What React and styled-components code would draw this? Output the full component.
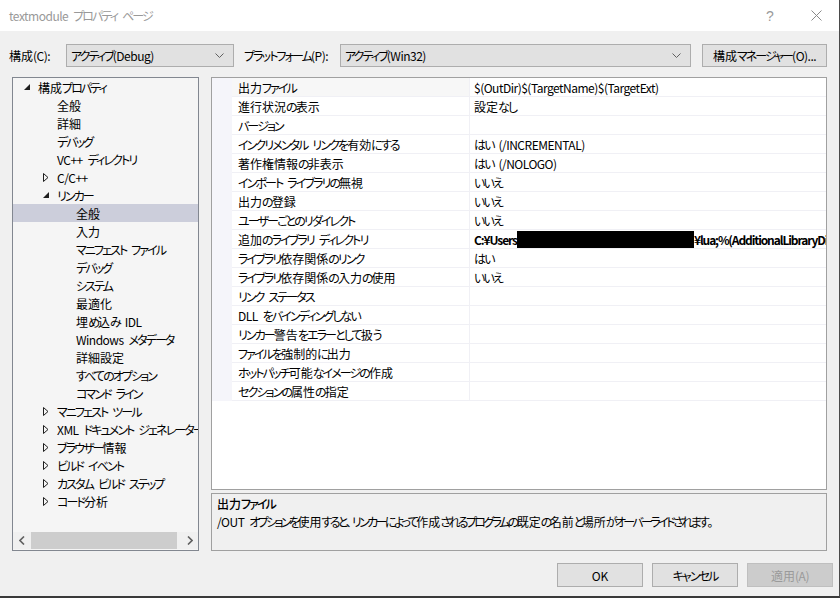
import React from 'react';
import styled, { createGlobalStyle } from 'styled-components';

const GlobalStyle = createGlobalStyle`
  html, body {
    margin: 0;
    padding: 0;
  }
  body {
    font-family: "Noto Sans CJK JP", "Noto Sans", sans-serif;
    font-size: 12px;
    color: #000;
    overflow: hidden;
  }
  * {
    box-sizing: border-box;
  }
`;

const Window = styled.div`
  width: 840px;
  height: 598px;
  display: flex;
  flex-direction: column;
  background: #f0f0f0;
  border-right: 1px solid #4a4a4a;
  border-bottom: 2px solid #3a3a3a;
  font-feature-settings: 'palt';
  overflow: hidden;
`;

const TitleBar = styled.div`
  height: 31px;
  flex: none;
  display: flex;
  align-items: center;
  padding-left: 9px;
  background: #fff;
  color: #999;
  line-height: 1;
`;

const TitleText = styled.div`
  flex: 1;
  padding-top: 1px;
`;

const TitleButton = styled.div`
  width: 46px;
  height: 31px;
  display: flex;
  align-items: center;
  justify-content: center;
  color: #9a9a9a;
  font-family: 'Liberation Sans', sans-serif;
  font-size: 14px;
`;

const Toolbar = styled.div`
  margin-top: 13px;
  height: 23px;
  flex: none;
  display: flex;
  align-items: center;
  padding-left: 9px;
`;

const Label = styled.span`
  width: ${({ w }) => w}px;
  flex: none;
  white-space: nowrap;
`;

const Combo = styled.div`
  width: ${({ w }) => w}px;
  height: 23px;
  flex: none;
  margin-right: ${({ mr }) => mr || 0}px;
  display: flex;
  align-items: center;
  justify-content: space-between;
  padding: 0 9px 0 4px;
  background: #e1e1e1;
  border: 1px solid #adadad;
`;

const Button = styled.div`
  width: ${({ w }) => w || 86}px;
  height: ${({ h }) => h || 24}px;
  display: flex;
  align-items: center;
  justify-content: center;
  background: ${({ disabled }) => (disabled ? '#cccccc' : '#e1e1e1')};
  border: 1px solid ${({ disabled }) => (disabled ? '#bfbfbf' : '#adadad')};
  color: ${({ disabled }) => (disabled ? '#9a9a9a' : '#000')};
  white-space: nowrap;
`;

const Main = styled.div`
  margin-top: 10px;
  height: 474px;
  flex: none;
  display: flex;
  gap: 12px;
  padding: 0 12px;
`;

const Tree = styled.div`
  width: 187px;
  flex: none;
  display: flex;
  flex-direction: column;
  background: #f5f5f5;
  border: 1px solid #828790;
`;

const TreeList = styled.div`
  flex: 1;
  overflow: hidden;
`;

const TreeRow = styled.div`
  height: 18px;
  display: flex;
  align-items: center;
  padding-left: ${({ level }) => 6 + level * 19}px;
  background: ${({ selected }) => (selected ? '#cccedb' : 'transparent')};
  white-space: pre;
  overflow: hidden;
`;

const Expander = styled.span`
  width: 19px;
  flex: none;
  display: flex;
  justify-content: flex-end;
  align-items: center;
  padding-right: 8px;
`;

const HScroll = styled.div`
  height: 17px;
  margin-bottom: 1px;
  flex: none;
  display: flex;
  align-items: center;
  background: #f0f0f0;
`;

const ScrollArrow = styled.div`
  width: 17px;
  height: 17px;
  display: flex;
  align-items: center;
  justify-content: center;
`;

const ScrollThumb = styled.div`
  width: 146px;
  height: 17px;
  margin-left: 1px;
  background: #cdcdcd;
`;

const ScrollTrack = styled.div`
  flex: 1;
`;

const RightPane = styled.div`
  flex: 1;
  display: flex;
  flex-direction: column;
  gap: 3px;
`;

const Grid = styled.div`
  height: 413px;
  flex: none;
  background: #fff;
  border: 1px solid #a0a0a0;
  overflow: hidden;
`;

const PropRow = styled.div`
  height: 19px;
  display: grid;
  grid-template-columns: 20px 238px 1fr;
`;

const Gutter = styled.div`
  background: #f5f5fa;
`;

const Cell = styled.div`
  display: flex;
  align-items: center;
  padding-left: ${({ pad }) => pad}px;
  border-bottom: 1px solid #f0f0f5;
  border-right: ${({ divider }) => (divider ? '1px solid #f0f0f5' : 'none')};
  background: ${({ active }) => (active ? '#f7f7f7' : '#fff')};
  font-weight: ${({ bold }) => (bold ? 700 : 400)};
  white-space: pre;
  overflow: hidden;
`;

const Redacted = styled.span`
  display: inline-block;
  width: 177px;
  height: 17px;
  flex: none;
  background: #000;
`;

const Description = styled.div`
  flex: 1;
  padding: 1px 5px;
  border: 1px solid #a0a0a0;
  line-height: 18px;
  white-space: pre;
`;

const DescTitle = styled.div`
  font-weight: 500;
`;

const Footer = styled.div`
  margin-top: 12px;
  display: flex;
  justify-content: flex-end;
  gap: 9px;
  padding-right: 6px;
`;

// Yu Gothic UI has much narrower kana than Noto, so kana runs are tightened
const spacing = {
  kana: -1.9,
  latin: -0.5,
  bold: -1.1,
  space: 2.2,
  other: 0,
};

const Run = styled.span`
  letter-spacing: ${({ ls }) => ls}px;
`;

const classify = (ch) => {
  if (ch === ' ') return 'space';
  if (/[\u3041-\u3096\u30A1-\u30FA\u30FC]/.test(ch)) return 'kana';
  if (/[\x21-\x7e¥]/.test(ch)) return 'latin';
  return 'other';
};

const Jp = ({ children, bold, kana }) => {
  const runs = [];
  for (const ch of String(children)) {
    let kind = classify(ch);
    if (bold && kind === 'latin') kind = 'bold';
    const last = runs[runs.length - 1];
    if (last && last.kind === kind) last.text += ch;
    else runs.push({ kind, text: ch });
  }
  return runs.map((r, i) => (
    <Run key={i} ls={r.kind === 'kana' && kana !== undefined ? kana : spacing[r.kind]}>
      {r.text}
    </Run>
  ));
};

const ChevronDown = () => (
  <svg width="9" height="5" viewBox="0 0 9 5">
    <polyline points="0.5,0.5 4.5,4.5 8.5,0.5" fill="none" stroke="#606060" strokeWidth="1" />
  </svg>
);

const Expanded = () => (
  <svg width="6" height="6" viewBox="0 0 6 6">
    <polygon points="6,0 6,6 0,6" fill="#1e1e1e" />
  </svg>
);

const Collapsed = () => (
  <svg width="6" height="9" viewBox="0 0 6 9">
    <polygon points="0.5,0.5 5,4.5 0.5,8.5" fill="none" stroke="#1e1e1e" strokeWidth="1" />
  </svg>
);

const ArrowSide = ({ right }) => (
  <svg width="6" height="9" viewBox="0 0 6 9">
    <polyline
      points={right ? '1,0.5 5,4.5 1,8.5' : '5,0.5 1,4.5 5,8.5'}
      fill="none"
      stroke="#606060"
      strokeWidth="1.6"
    />
  </svg>
);

const CloseIcon = () => (
  <svg width="11" height="11" viewBox="0 0 11 11">
    <path d="M0.5 0.5 L10.5 10.5 M10.5 0.5 L0.5 10.5" stroke="#8a8a8a" strokeWidth="1" />
  </svg>
);

const treeItems = [
  { level: 0, label: '構成プロパティ', open: true },
  { level: 1, label: '全般' },
  { level: 1, label: '詳細' },
  { level: 1, label: 'デバッグ' },
  { level: 1, label: 'VC++ ディレクトリ' },
  { level: 1, label: 'C/C++', open: false },
  { level: 1, label: 'リンカー', open: true },
  { level: 2, label: '全般', selected: true },
  { level: 2, label: '入力' },
  { level: 2, label: 'マニフェスト ファイル' },
  { level: 2, label: 'デバッグ' },
  { level: 2, label: 'システム' },
  { level: 2, label: '最適化' },
  { level: 2, label: '埋め込み IDL' },
  { level: 2, label: 'Windows メタデータ' },
  { level: 2, label: '詳細設定' },
  { level: 2, label: 'すべてのオプション' },
  { level: 2, label: 'コマンド ライン' },
  { level: 1, label: 'マニフェスト ツール', open: false },
  { level: 1, label: 'XML ドキュメント ジェネレーター', open: false },
  { level: 1, label: 'ブラウザー情報', open: false },
  { level: 1, label: 'ビルド イベント', open: false },
  { level: 1, label: 'カスタム ビルド ステップ', open: false },
  { level: 1, label: 'コード分析', open: false },
];

const properties = [
  { name: '出力ファイル', value: '$(OutDir)$(TargetName)$(TargetExt)' },
  { name: '進行状況の表示', value: '設定なし' },
  { name: 'バージョン', value: '' },
  { name: 'インクリメンタル リンクを有効にする', value: 'はい (/INCREMENTAL)' },
  { name: '著作権情報の非表示', value: 'はい (/NOLOGO)' },
  { name: 'インポート ライブラリの無視', value: 'いいえ' },
  { name: '出力の登録', value: 'いいえ' },
  { name: 'ユーザーごとのリダイレクト', value: 'いいえ' },
  { name: '追加のライブラリ ディレクトリ', redacted: true },
  { name: 'ライブラリ依存関係のリンク', value: 'はい' },
  { name: 'ライブラリ依存関係の入力の使用', value: 'いいえ' },
  { name: 'リンク ステータス', value: '' },
  { name: 'DLL をバインディングしない', value: '' },
  { name: 'リンカー警告をエラーとして扱う', value: '' },
  { name: 'ファイルを強制的に出力', value: '' },
  { name: 'ホットパッチ可能なイメージの作成', value: '' },
  { name: 'セクションの属性の指定', value: '' },
];

const App = () => (
  <Window>
    <GlobalStyle />
    <TitleBar>
      <TitleText>
        <Jp>textmodule プロパティ ページ</Jp>
      </TitleText>
      <TitleButton>?</TitleButton>
      <TitleButton>
        <CloseIcon />
      </TitleButton>
    </TitleBar>

    <Toolbar>
      <Label w={57}>
        <Jp>構成(C):</Jp>
      </Label>
      <Combo w={168} mr={10}>
        <span>
          <Jp>アクティブ(Debug)</Jp>
        </span>
        <ChevronDown />
      </Combo>
      <Label w={96}>
        <Jp>プラットフォーム(P):</Jp>
      </Label>
      <Combo w={351} mr={11}>
        <span>
          <Jp>アクティブ(Win32)</Jp>
        </span>
        <ChevronDown />
      </Combo>
      <Button w={125} h={23}>
        <Jp>構成マネージャー(O)...</Jp>
      </Button>
    </Toolbar>

    <Main>
      <Tree>
        <TreeList>
          {treeItems.map((item, i) => (
            <TreeRow key={i} level={item.level} selected={item.selected}>
              <Expander>
                {item.open === true && <Expanded />}
                {item.open === false && <Collapsed />}
              </Expander>
              <Jp>{item.label}</Jp>
            </TreeRow>
          ))}
        </TreeList>
        <HScroll>
          <ScrollArrow>
            <ArrowSide />
          </ScrollArrow>
          <ScrollThumb />
          <ScrollTrack />
          <ScrollArrow>
            <ArrowSide right />
          </ScrollArrow>
        </HScroll>
      </Tree>

      <RightPane>
        <Grid>
          {properties.map((p, i) => (
            <PropRow key={i}>
              <Gutter />
              <Cell pad={6} divider active={i === 0}>
                <Jp>{p.name}</Jp>
              </Cell>
              {p.redacted ? (
                <Cell pad={4} bold>
                  <Jp bold>C:¥Users</Jp>
                  <Redacted />
                  <Jp bold>¥lua;%(AdditionalLibraryDirectories)</Jp>
                </Cell>
              ) : (
                <Cell pad={4}>
                  <Jp>{p.value}</Jp>
                </Cell>
              )}
            </PropRow>
          ))}
        </Grid>
        <Description>
          <DescTitle>
            <Jp>出力ファイル</Jp>
          </DescTitle>
          <div>
            <Jp kana={-2.6}>
              /OUT オプションを使用すると、リンカーによって作成されるプログラムの既定の名前と場所がオーバーライドされます。
            </Jp>
          </div>
        </Description>
      </RightPane>
    </Main>

    <Footer>
      <Button>OK</Button>
      <Button>
        <Jp>キャンセル</Jp>
      </Button>
      <Button disabled>
        <Jp>適用(A)</Jp>
      </Button>
    </Footer>
  </Window>
);

export default App;
